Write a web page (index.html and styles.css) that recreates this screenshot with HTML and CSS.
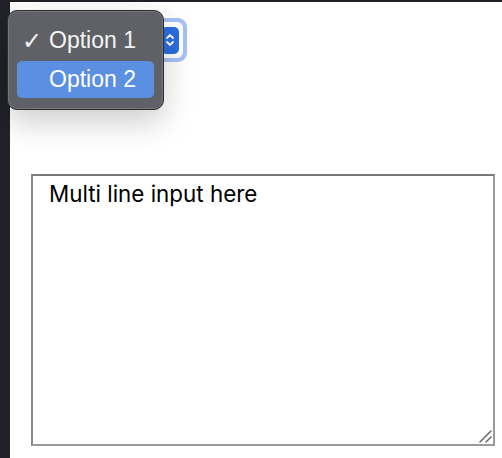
FILE: index.html
```html
<!DOCTYPE html>
<html>
<head>
<meta charset="utf-8">
<link rel="stylesheet" href="styles.css">
</head>
<body>
<div class="frame">
  <div class="side"></div>
  <div class="main">
    <div class="select-row">
      <div class="select-ring">
        <div class="select">
          <span class="select-btn">
            <svg width="12" height="20" viewBox="0 0 12 20"><path d="M3 8 L6 5 L9 8 M3 12 L6 15 L9 12" fill="none" stroke="#fff" stroke-width="1.8" stroke-linecap="round" stroke-linejoin="round"/></svg>
          </span>
        </div>
      </div>
    </div>
    <div class="area-wrap">
      <textarea class="area">Multi line input here</textarea>
      <svg class="grip" width="14" height="14" viewBox="0 0 14 14"><path d="M2 13 L13 2 M8 13 L13 8" stroke="#6e6e6e" stroke-width="1.6" stroke-linecap="round"/></svg>
    </div>
  </div>
  <div class="menu">
    <div class="item"><span class="check">✓</span>Option 1</div>
    <div class="item active"><span class="check"></span>Option 2</div>
  </div>
</div>
</body>
</html>
```

FILE: styles.css
```css
html, body {
  margin: 0;
  padding: 0;
  background: #fff;
}
.frame {
  position: relative;
  display: flex;
  width: 502px;
  height: 458px;
  overflow: hidden;
  font-family: Inter, "Liberation Sans", sans-serif;
}
.side {
  width: 10px;
  background: #202228;
  flex: none;
}
.main {
  flex: 1;
  border-top: 2px solid #202228;
  display: flex;
  flex-direction: column;
  padding-left: 21px;
}
.select-row {
  height: 172px;
  display: flex;
  align-items: flex-start;
  padding-left: 119px;
  padding-top: 16px;
  box-sizing: border-box;
}
.select-ring {
  width: 37px;
  height: 44px;
  border-radius: 9px;
  background: #a6c2f4;
  padding: 4px;
  box-sizing: border-box;
}
.select {
  width: 100%;
  height: 100%;
  background: #fff;
  border-radius: 6px;
  display: flex;
  justify-content: flex-end;
  align-items: center;
  padding-right: 4px;
  box-sizing: border-box;
}
.select-btn {
  width: 18px;
  height: 27px;
  border-radius: 5px;
  background: #2b6de0;
  display: flex;
  align-items: center;
  justify-content: center;
}
.area-wrap {
  position: relative;
  width: 464px;
  height: 272px;
}
.area {
  display: block;
  width: 100%;
  height: 100%;
  box-sizing: border-box;
  border: 2px solid #9a9a9a;
  border-top-color: #7a7a7a;
  border-left-color: #8a8a8a;
  margin: 0;
  padding: 4px 16px;
  font-family: Inter, "Liberation Sans", sans-serif;
  font-size: 22.4px;
  color: #000;
  resize: none;
  outline: none;
  background: #fff;
}
.grip {
  position: absolute;
  right: 3px;
  bottom: 3px;
}
.menu {
  position: absolute;
  left: 7px;
  top: 10px;
  width: 157px;
  height: 100px;
  box-sizing: border-box;
  background: #5f6166;
  border: 1px solid #2c2d30;
  border-radius: 10px;
  box-shadow: inset 0 0 0 1px #74767b, 0 12px 32px rgba(0, 0, 0, 0.2);
  padding: 11px 9px;
  display: flex;
  flex-direction: column;
  gap: 2px;
}
.item {
  height: 37px;
  display: flex;
  align-items: center;
  color: #f4f4f5;
  font-family: "Liberation Sans", Arial, sans-serif;
  font-size: 23px;
  border-radius: 5px;
  padding-left: 5px;
}
.item.active {
  background: #5a8fe2;
  color: #fff;
}
.check {
  width: 27px;
  flex: none;
  font-size: 24px;
  font-weight: bold;
  font-family: "DejaVu Sans", sans-serif;
}
```
